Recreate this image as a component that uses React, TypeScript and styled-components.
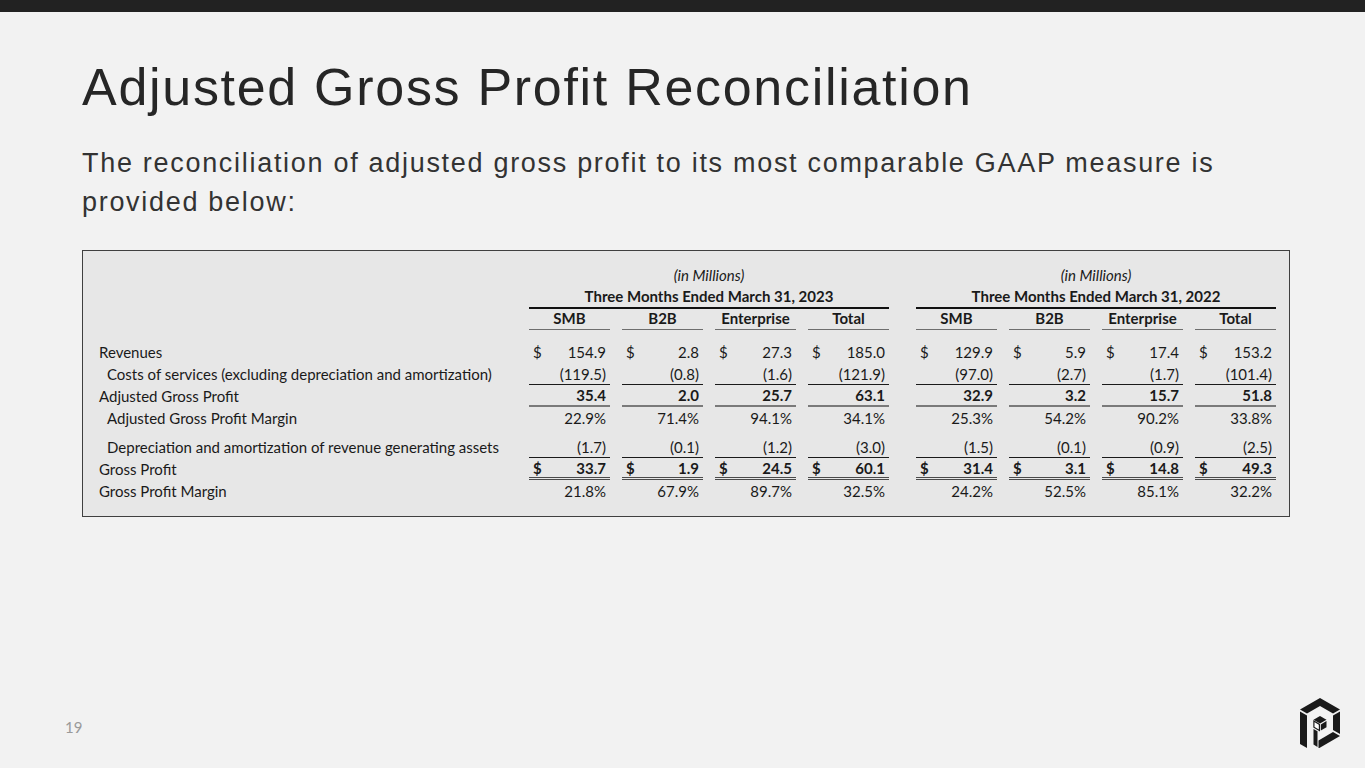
import styled, { createGlobalStyle } from "styled-components";

const GlobalStyle = createGlobalStyle`
  html, body {
    margin: 0;
    padding: 0;
  }
  body {
    background: #f2f2f2;
  }
  * {
    box-sizing: border-box;
  }
`;

type Line = "none" | "single" | "gray" | "double";

interface RowData {
  label: string;
  indent?: boolean;
  values: string[];
  dollar?: boolean;
  bold?: boolean;
  line?: Line;
  gapBefore?: boolean;
}

const rows: RowData[] = [
  {
    label: "Revenues",
    dollar: true,
    values: ["154.9", "2.8", "27.3", "185.0", "129.9", "5.9", "17.4", "153.2"],
  },
  {
    label: "Costs of services (excluding depreciation and amortization)",
    indent: true,
    line: "single",
    values: ["(119.5)", "(0.8)", "(1.6)", "(121.9)", "(97.0)", "(2.7)", "(1.7)", "(101.4)"],
  },
  {
    label: "Adjusted Gross Profit",
    bold: true,
    line: "gray",
    values: ["35.4", "2.0", "25.7", "63.1", "32.9", "3.2", "15.7", "51.8"],
  },
  {
    label: "Adjusted Gross Profit Margin",
    indent: true,
    values: ["22.9%", "71.4%", "94.1%", "34.1%", "25.3%", "54.2%", "90.2%", "33.8%"],
  },
  {
    label: "Depreciation and amortization of revenue generating assets",
    indent: true,
    gapBefore: true,
    line: "single",
    values: ["(1.7)", "(0.1)", "(1.2)", "(3.0)", "(1.5)", "(0.1)", "(0.9)", "(2.5)"],
  },
  {
    label: "Gross Profit",
    bold: true,
    dollar: true,
    line: "double",
    values: ["33.7", "1.9", "24.5", "60.1", "31.4", "3.1", "14.8", "49.3"],
  },
  {
    label: "Gross Profit Margin",
    values: ["21.8%", "67.9%", "89.7%", "32.5%", "24.2%", "52.5%", "85.1%", "32.2%"],
  },
];

const segments = ["SMB", "B2B", "Enterprise", "Total"];

const Slide = styled.div`
  height: 100vh;
  display: flex;
  flex-direction: column;
  background: #f2f2f2;
  color: #262626;
`;

const TopBar = styled.div`
  height: 12px;
  background: #222222;
  flex-shrink: 0;
`;

const Content = styled.main`
  padding: 0 75px 0 82px;
  display: flex;
  flex-direction: column;
`;

const Title = styled.h1`
  margin: 45px 0 0;
  font-family: "Liberation Sans", Arial, sans-serif;
  font-weight: 400;
  font-size: 52px;
  letter-spacing: 1.7px;
  line-height: 60px;
  color: #262626;
`;

const Subtitle = styled.p`
  margin: 27px 0 0;
  font-family: "Liberation Sans", Arial, sans-serif;
  font-size: 27px;
  letter-spacing: 1.7px;
  line-height: 39px;
  color: #333333;
`;

const TableCard = styled.section`
  margin-top: 28px;
  width: 1208px;
  background: #e7e7e7;
  border: 1px solid #404040;
  padding: 13px 14px 14px 16px;
  font-family: Lato, "Open Sans", sans-serif;
  font-size: 15px;
  color: #1a1a1a;
`;

const Row = styled.div<{ $gap?: boolean }>`
  display: grid;
  grid-template-columns: 418px repeat(4, 81px) 3px repeat(4, 81px);
  column-gap: 12px;
  height: 22px;
  margin-top: ${(p) => (p.$gap ? "7px" : "0")};
`;

const HeadRow = styled(Row)<{ $after?: number }>`
  margin-bottom: ${(p) => p.$after ?? 0}px;
`;

const Unit = styled.div<{ $col: string }>`
  grid-column: ${(p) => p.$col};
  text-align: center;
  font-style: italic;
  line-height: 22px;
`;

const Period = styled.div<{ $col: string }>`
  grid-column: ${(p) => p.$col};
  text-align: center;
  font-weight: 700;
  line-height: 21px;
  border-bottom: 2px solid #111111;
`;

const ColHead = styled.div`
  text-align: center;
  font-weight: 700;
  line-height: 21px;
  border-bottom: 1.5px solid #6e6e6e;
`;

const Label = styled.div<{ $indent?: boolean }>`
  padding-left: ${(p) => (p.$indent ? "8px" : "0")};
  line-height: 22px;
  white-space: nowrap;
`;

const lineStyles: Record<Line, string> = {
  none: "none",
  single: "1px solid #1a1a1a",
  gray: "2px solid #7a7a7a",
  double: "3px double #4a4a4a",
};

const Cell = styled.div<{ $line: Line; $bold?: boolean }>`
  display: flex;
  justify-content: space-between;
  align-items: center;
  padding: 0 4px;
  font-weight: ${(p) => (p.$bold ? 700 : 400)};
  border-bottom: ${(p) => lineStyles[p.$line]};
`;

const Spacer = styled.div``;

const Footer = styled.footer`
  margin-top: auto;
  display: flex;
  align-items: center;
  justify-content: space-between;
  padding: 0 25px 20px 65px;
`;

const PageNum = styled.span`
  font-family: Lato, "Open Sans", sans-serif;
  font-size: 15px;
  color: #9a9a9a;
  padding-top: 8px;
`;

const Logo = () => (
  <svg width="40" height="50" viewBox="0 0 40 50" aria-label="logo">
    <g fill="#1a1a1a">
      <polygon points="0,11.5 20,0 40,11.5 33,15.5 20,8 7,15.5" />
      <polygon points="0,13.5 7,17.5 7,50 0,46" />
      <polygon points="33,17.5 40,13.5 40,36 33,32" />
      <polygon points="33,34 40,38 18.5,50.5 18.5,42.5" />
      <polygon points="13.5,31 17.5,33.3 17.5,49 13.5,46.5" />
      <polygon points="20,18 26.5,21.7 20,25.4 13.5,21.7" />
      <polygon points="20.8,26.4 26.5,23.1 26.5,29.3 20.8,32.6" />
    </g>
    <polygon
      points="13.9,23.1 19.4,26.4 19.4,32.4 13.9,29.2"
      fill="#ffffff"
      stroke="#1a1a1a"
      strokeWidth="1.2"
    />
  </svg>
);

const DataCells = ({ row, from }: { row: RowData; from: number }) => (
  <>
    {row.values.slice(from, from + 4).map((v, i) => (
      <Cell key={i} $line={row.line ?? "none"} $bold={row.bold}>
        <span>{row.dollar ? "$" : ""}</span>
        <span>{v}</span>
      </Cell>
    ))}
  </>
);

export default function App() {
  return (
    <>
      <GlobalStyle />
      <Slide>
        <TopBar />
        <Content>
          <Title>Adjusted Gross Profit Reconciliation</Title>
          <Subtitle>
            The reconciliation of adjusted gross profit to its most comparable GAAP measure is
            provided below:
          </Subtitle>

          <TableCard>
            <HeadRow>
              <Unit $col="2 / 6">(in Millions)</Unit>
              <Unit $col="7 / 11">(in Millions)</Unit>
            </HeadRow>
            <HeadRow>
              <Period $col="2 / 6">Three Months Ended March 31, 2023</Period>
              <Period $col="7 / 11">Three Months Ended March 31, 2022</Period>
            </HeadRow>
            <HeadRow $after={11}>
              <Spacer />
              {segments.map((s) => (
                <ColHead key={"a" + s}>{s}</ColHead>
              ))}
              <Spacer />
              {segments.map((s) => (
                <ColHead key={"b" + s}>{s}</ColHead>
              ))}
            </HeadRow>

            {rows.map((row) => (
              <Row key={row.label} $gap={row.gapBefore}>
                <Label $indent={row.indent}>{row.label}</Label>
                <DataCells row={row} from={0} />
                <Spacer />
                <DataCells row={row} from={4} />
              </Row>
            ))}
          </TableCard>
        </Content>

        <Footer>
          <PageNum>19</PageNum>
          <Logo />
        </Footer>
      </Slide>
    </>
  );
}
